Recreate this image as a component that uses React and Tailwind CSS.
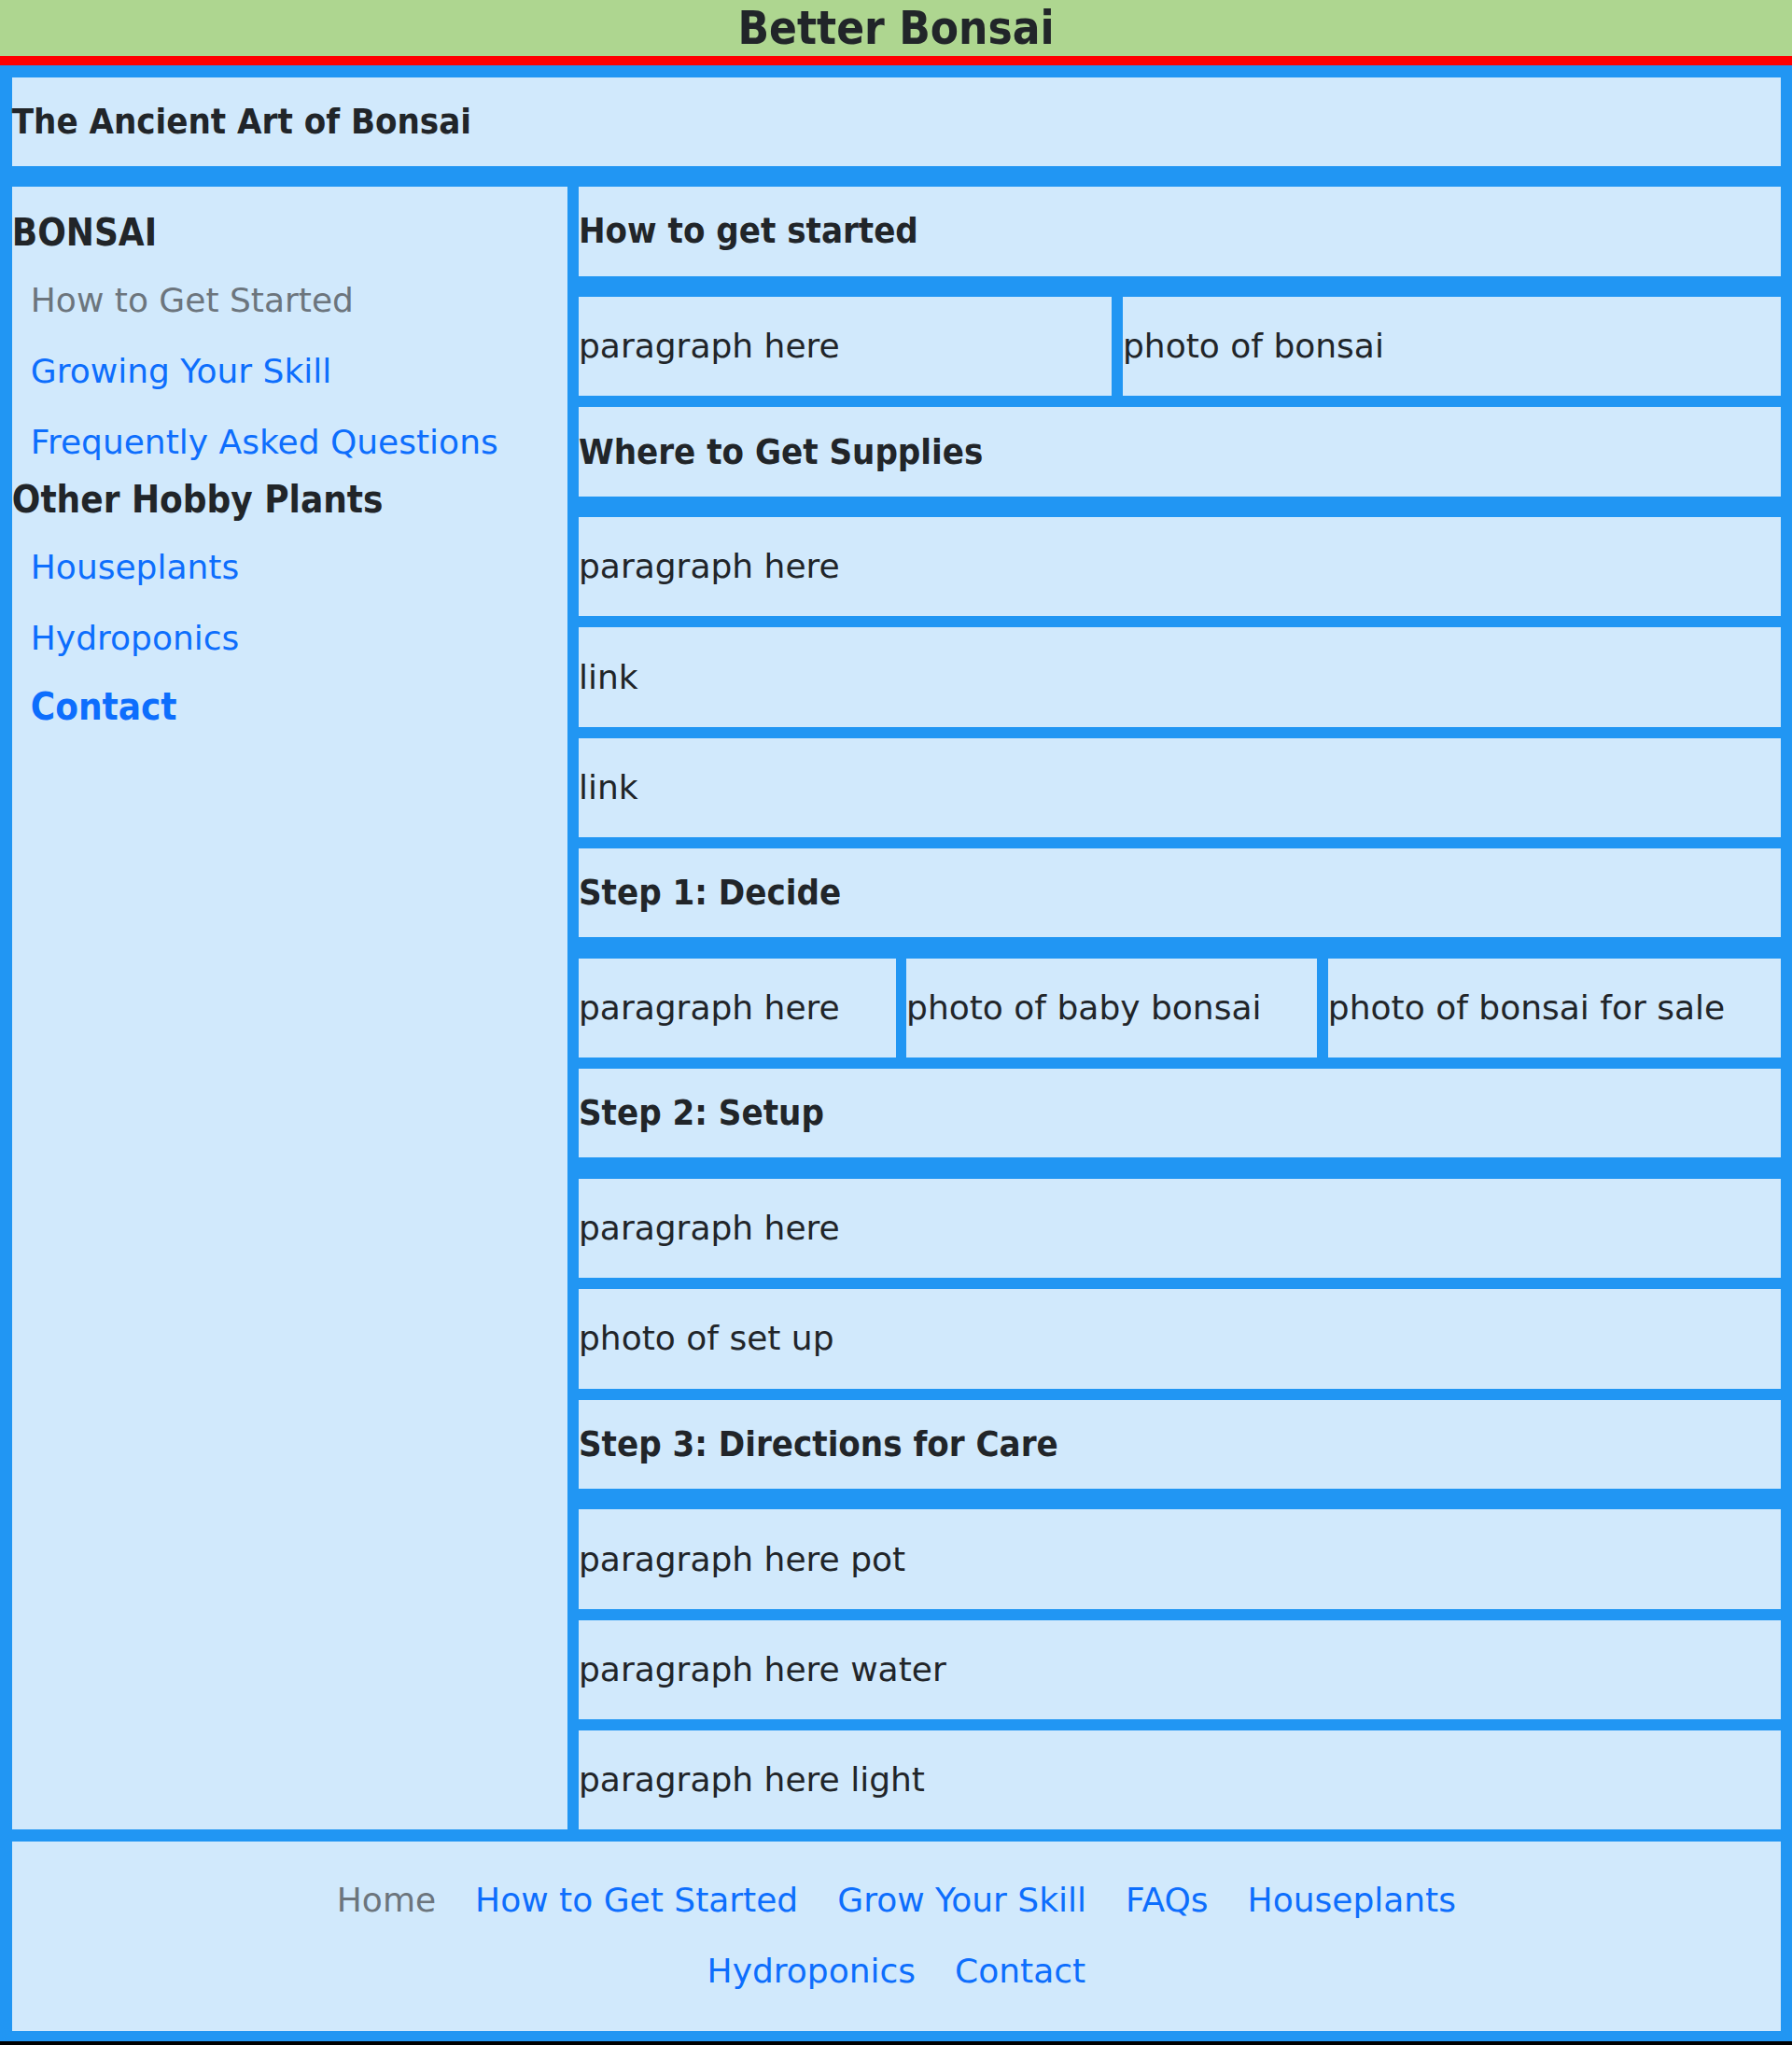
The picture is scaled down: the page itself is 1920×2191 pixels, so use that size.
import React from "react";

const box = "bg-[#d1e9fc] flex items-center";
const heading = "font-['DejaVu_Sans_Condensed','DejaVu_Sans',sans-serif] font-bold text-[38px] leading-[45px]";

const SIDE = [
  { type: "h", label: "BONSAI" },
  { type: "a", label: "How to Get Started", muted: true },
  { type: "a", label: "Growing Your Skill" },
  { type: "a", label: "Frequently Asked Questions" },
  { type: "h", label: "Other Hobby Plants" },
  { type: "a", label: "Houseplants" },
  { type: "a", label: "Hydroponics" },
];

const FOOTER = ["Home", "How to Get Started", "Grow Your Skill", "FAQs", "Houseplants", "Hydroponics", "Contact"];

function Heading({ children }) {
  return (
    <div className={`${box} h-[95.3px] mb-[22.5px]`}>
      <h3 className={heading}>{children}</h3>
    </div>
  );
}

function Row({ items, first }) {
  return (
    <div className="flex gap-[11.5px]">
      {items.map((t, i) => (
        <div
          key={t}
          className={`${box} h-[106.3px] ${first && i === 0 ? "w-[571.5px] shrink-0" : "flex-auto"}`}
        >
          <p className="leading-[42px]">{t}</p>
        </div>
      ))}
    </div>
  );
}

export default function App() {
  return (
    <div className="min-h-screen bg-black font-['DejaVu_Sans',sans-serif] text-[36px] text-[#212529]">
      <header className="h-[70px] bg-[#aed690] border-b-[10px] border-[#ff0000] flex items-center justify-center">
        <h1 className="font-['DejaVu_Sans_Condensed','DejaVu_Sans',sans-serif] font-bold text-[49px] leading-[57px]">
          Better Bonsai
        </h1>
      </header>

      <div className="bg-[#2196f3] pt-[13px] pl-[12.8px] pr-[12px] pb-[11px]">
        <div className={`${box} h-[95px]`}>
          <h2 className={heading}>The Ancient Art of Bonsai</h2>
        </div>

        <div className="mt-[22.3px] flex gap-[11.7px]">
          <aside className="w-[595.5px] shrink-0 bg-[#d1e9fc] pt-[26px]">
            {SIDE.map((s) =>
              s.type === "h" ? (
                <h4
                  key={s.label}
                  className="font-['DejaVu_Sans_Condensed','DejaVu_Sans',sans-serif] font-bold text-[40px] leading-[46.6px] mb-[11.5px]"
                >
                  {s.label}
                </h4>
              ) : (
                <a
                  key={s.label}
                  href="#"
                  className={`block px-[20px] py-[17px] leading-[42px] ${
                    s.muted ? "text-[#6c757d]" : "text-[#0d6efd]"
                  }`}
                >
                  {s.label}
                </a>
              )
            )}
            <a
              href="#"
              className="block px-[20px] pt-[12px] font-['DejaVu_Sans_Condensed','DejaVu_Sans',sans-serif] font-bold text-[40px] leading-[46.6px] text-[#0d6efd]"
            >
              Contact
            </a>
          </aside>

          <main className="flex-1 flex flex-col gap-[12px]">
            <div>
              <Heading>How to get started</Heading>
              <Row first items={["paragraph here", "photo of bonsai"]} />
            </div>
            <div>
              <Heading>Where to Get Supplies</Heading>
              <Row items={["paragraph here"]} />
            </div>
            <Row items={["link"]} />
            <Row items={["link "]} />
            <div>
              <Heading>Step 1: Decide</Heading>
              <Row items={["paragraph here", "photo of baby bonsai", "photo of bonsai for sale"]} />
            </div>
            <div>
              <Heading>Step 2: Setup</Heading>
              <Row items={["paragraph here"]} />
            </div>
            <Row items={["photo of set up"]} />
            <div>
              <Heading>Step 3: Directions for Care</Heading>
              <Row items={["paragraph here pot"]} />
            </div>
            <Row items={["paragraph here water"]} />
            <Row items={["paragraph here light"]} />
          </main>
        </div>

        <footer className="mt-[13px] h-[203px] bg-[#d1e9fc] pt-[25px]">
          <nav className="max-w-[1320px] mx-auto flex flex-wrap justify-center">
            {FOOTER.map((f, i) => (
              <a
                key={f}
                href="#"
                className={`px-[21px] py-[17px] leading-[42px] ${i === 0 ? "text-[#6c757d]" : "text-[#0d6efd]"}`}
              >
                {f}
              </a>
            ))}
          </nav>
        </footer>
      </div>
    </div>
  );
}
